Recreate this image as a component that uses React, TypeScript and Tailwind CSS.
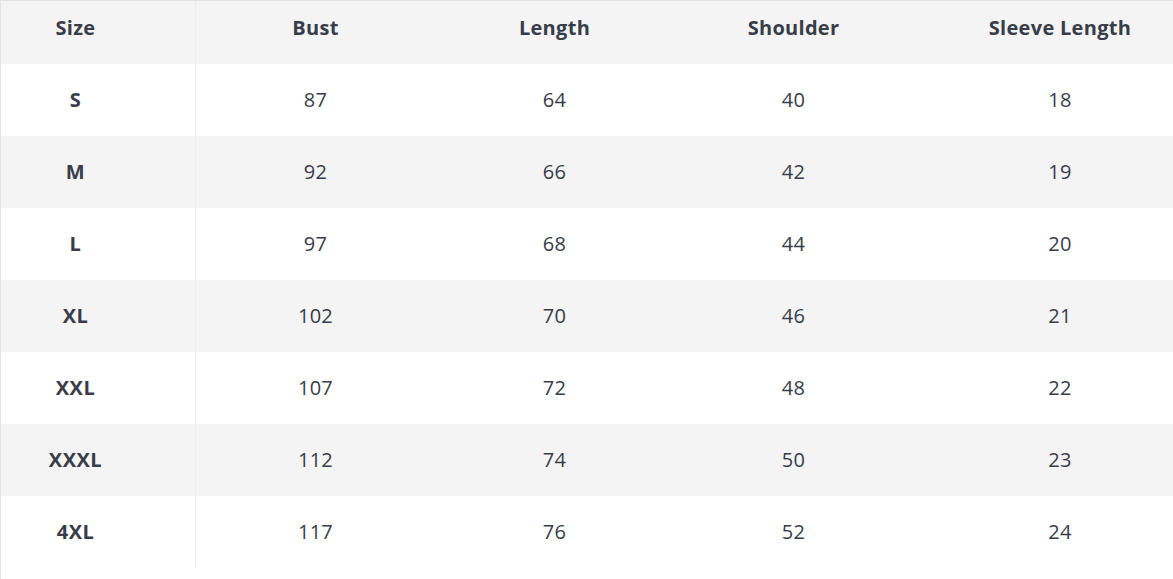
import React from "react";

const headers = ["Size", "Bust", "Length", "Shoulder", "Sleeve Length"];
const rows = [
  ["S", "87", "64", "40", "18"],
  ["M", "92", "66", "42", "19"],
  ["L", "97", "68", "44", "20"],
  ["XL", "102", "70", "46", "21"],
  ["XXL", "107", "72", "48", "22"],
  ["XXXL", "112", "74", "50", "23"],
  ["4XL", "117", "76", "52", "24"],
];

export default function App() {
  return (
    <div
      className="w-[1173px] h-[579px] bg-white border-l border-[#e3e3e3] text-[#383d49] overflow-hidden"
      style={{ fontFamily: "'Open Sans', Lato, sans-serif" }}
    >
      <div className="grid grid-cols-[195px_239px_239px_239px_1fr] border-t border-[#e3e3e3]">
        {headers.map((h, i) => (
          <div
            key={h}
            className={`h-[63px] bg-[#f4f4f4] flex items-center justify-center font-bold text-[20px] tracking-[0.3px] ${
              i === 0 ? "border-r border-[#ececec] pr-[45px] pb-[9px]" : i === 4 ? "pl-[34px] pb-[9px]" : "pb-[9px]"
            }`}
          >
            {h}
          </div>
        ))}
        {rows.map((r, ri) =>
          r.map((c, ci) => (
            <div
              key={`${ri}-${ci}`}
              className={`h-[72px] flex items-center justify-center text-[20px] ${
                ri % 2 === 1 ? "bg-[#f4f4f4]" : "bg-white"
              } ${ci === 0 ? "font-bold border-r border-[#ececec] pr-[45px] tracking-[0.5px]" : "tracking-[0.3px]"} ${
                ci === 4 ? "pl-[34px]" : ""
              }`}
            >
              {c}
            </div>
          ))
        )}
      </div>
    </div>
  );
}
